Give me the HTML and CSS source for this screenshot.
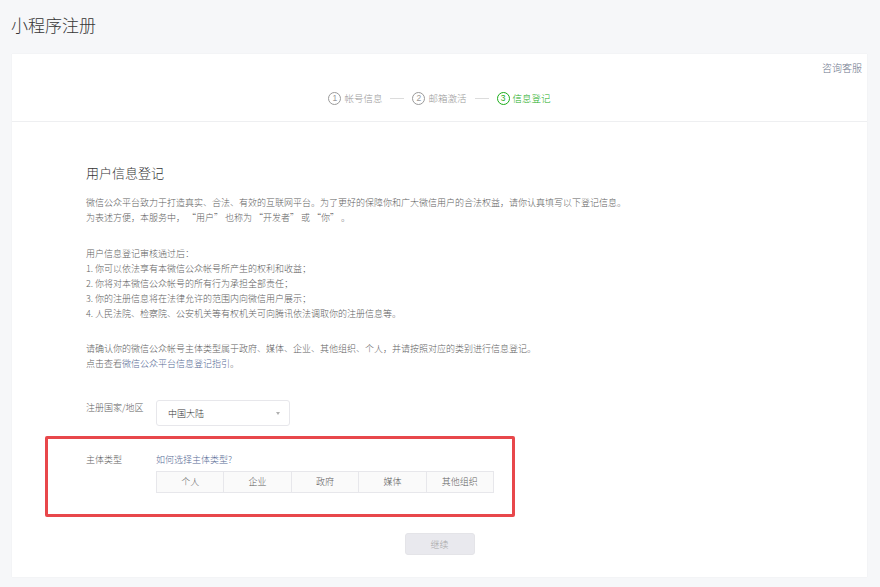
FILE: index.html
```html
<!DOCTYPE html>
<html lang="zh-CN">
<head>
<meta charset="utf-8">
<title>小程序注册</title>
<link rel="stylesheet" href="styles.css">
</head>
<body>
<h1 class="page-title">小程序注册</h1>
<div class="card">
  <div class="card-head">
    <div class="service"><a href="#">咨询客服</a></div>
    <ol class="steps">
      <li class="step"><span class="num">1</span>帐号信息</li>
      <li class="sep"></li>
      <li class="step"><span class="num">2</span>邮箱激活</li>
      <li class="sep"></li>
      <li class="step current"><span class="num">3</span>信息登记</li>
    </ol>
  </div>
  <div class="content">
    <h2 class="section-title">用户信息登记</h2>
    <p class="para first">微信公众平台致力于打造真实、合法、有效的互联网平台。为了更好的保障你和广大微信用户的合法权益，请你认真填写以下登记信息。<br>为表述方便，本服务中，&nbsp;“用户”&nbsp;也称为&nbsp;“开发者”&nbsp;或&nbsp;“你”&nbsp;。</p>
    <p class="para list">用户信息登记审核通过后：<br>1. 你可以依法享有本微信公众帐号所产生的权利和收益；<br>2. 你将对本微信公众帐号的所有行为承担全部责任；<br>3. 你的注册信息将在法律允许的范围内向微信用户展示；<br>4. 人民法院、检察院、公安机关等有权机关可向腾讯依法调取你的注册信息等。</p>
    <p class="para confirm">请确认你的微信公众帐号主体类型属于政府、媒体、企业、其他组织、个人，并请按照对应的类别进行信息登记。<br>点击查看<a href="#">微信公众平台信息登记指引</a>。</p>
    <div class="form-row region-row">
      <label class="form-label">注册国家/地区</label>
      <div class="select"><span>中国大陆</span><i class="caret"></i></div>
    </div>
    <div class="form-row type-row">
      <label class="form-label">主体类型</label>
      <div class="type-field">
        <a href="#" class="help-link">如何选择主体类型?</a>
        <div class="types">
          <span class="type">个人</span>
          <span class="type">企业</span>
          <span class="type">政府</span>
          <span class="type">媒体</span>
          <span class="type">其他组织</span>
        </div>
      </div>
    </div>
    <div class="actions">
      <button class="btn" disabled>继续</button>
    </div>
  </div>
  <div class="highlight"></div>
</div>
</body>
</html>
```

FILE: styles.css
```css
* { box-sizing: border-box; }
html, body { margin: 0; padding: 0; }
body {
  background: #f6f7f9;
  font-family: "Noto Sans CJK SC", "Noto Sans", sans-serif;
  font-weight: 300;
  color: #353535;
  width: 880px;
  height: 587px;
  overflow: hidden;
}
a { text-decoration: none; color: #576b95; }
.page-title {
  margin: 0;
  padding: 14px 0 0 11px;
  height: 54px;
  font-size: 17px;
  font-weight: 300;
  line-height: 22px;
  color: #353535;
}
.card {
  position: relative;
  margin-left: 12px;
  width: 855px;
  height: 523px;
  background: #fff;
  box-shadow: 0 0 1px rgba(0,0,0,0.08);
}
.card-head {
  height: 68px;
  border-bottom: 1px solid #eeeff1;
  display: flex;
  flex-direction: column;
}
.service {
  display: flex;
  justify-content: flex-end;
  padding: 7px 5px 0 0;
  height: 28px;
  font-size: 10px;
  line-height: 14px;
}
.service a { color: #6b7489; }
.steps {
  list-style: none;
  margin: 0;
  padding: 9px 0 0 0;
  display: flex;
  justify-content: center;
  align-items: center;
  gap: 8px;
  font-size: 9.5px;
  line-height: 14px;
  color: #9a9a9a;
}
.step { display: flex; align-items: center; gap: 3px; }
.num {
  width: 13px;
  height: 13px;
  border: 1px solid currentColor;
  border-radius: 50%;
  font-size: 8.5px;
  line-height: 11px;
  text-align: center;
  font-family: "Liberation Sans", sans-serif;
}
.step.current { color: #1aad19; }
.sep { width: 14px; height: 1px; background: #dcdcdc; }
.content {
  padding: 42px 0 0 74px;
}
.section-title {
  margin: 0;
  font-size: 13px;
  font-weight: 300;
  line-height: 18px;
  color: #353535;
}
.para {
  margin: 0;
  font-size: 9px;
  line-height: 15px;
  color: #5f5f5f;
}
.para.first { margin-top: 13px; }
.para.list { margin-top: 21px; }
.para.confirm { margin-top: 20px; }
.form-row { display: flex; }
.form-label {
  width: 70px;
  font-size: 9px;
  line-height: 15px;
  color: #5f5f5f;
}
.region-row { margin-top: 29px; }
.select {
  width: 134px;
  height: 26px;
  border: 1px solid #e7e7eb;
  border-radius: 3px;
  display: flex;
  align-items: center;
  justify-content: space-between;
  padding: 0 9px 0 11px;
  font-size: 9px;
  color: #353535;
}
.caret {
  width: 0;
  height: 0;
  border-left: 2.5px solid transparent;
  border-right: 2.5px solid transparent;
  border-top: 3px solid #b0b0b0;
}
.type-row { margin-top: 26px; }
.type-field { display: flex; flex-direction: column; }
.help-link {
  font-size: 9px;
  line-height: 15px;
  color: #576b95;
}
.types {
  margin-top: 4px;
  display: flex;
  width: 338px;
  height: 22px;
  border: 1px solid #e7e7eb;
  background: #fafafa;
}
.type {
  flex: 1;
  text-align: center;
  font-size: 9px;
  line-height: 20px;
  color: #5f5f5f;
  border-left: 1px solid #e7e7eb;
}
.type:first-child { border-left: none; }
.actions {
  margin-top: 40px;
  padding-right: 74px;
  display: flex;
  justify-content: center;
}
.btn {
  width: 70px;
  height: 22px;
  border: 1px solid #e4e4e8;
  border-radius: 3px;
  background: #e9e9ee;
  color: #a8a8a8;
  font-family: inherit;
  font-weight: 300;
  font-size: 9px;
  padding: 0;
}
.highlight {
  position: absolute;
  left: 33px;
  top: 382px;
  width: 470px;
  height: 81px;
  border: 3px solid #e8474b;
  border-radius: 2px;
  pointer-events: none;
}
```
